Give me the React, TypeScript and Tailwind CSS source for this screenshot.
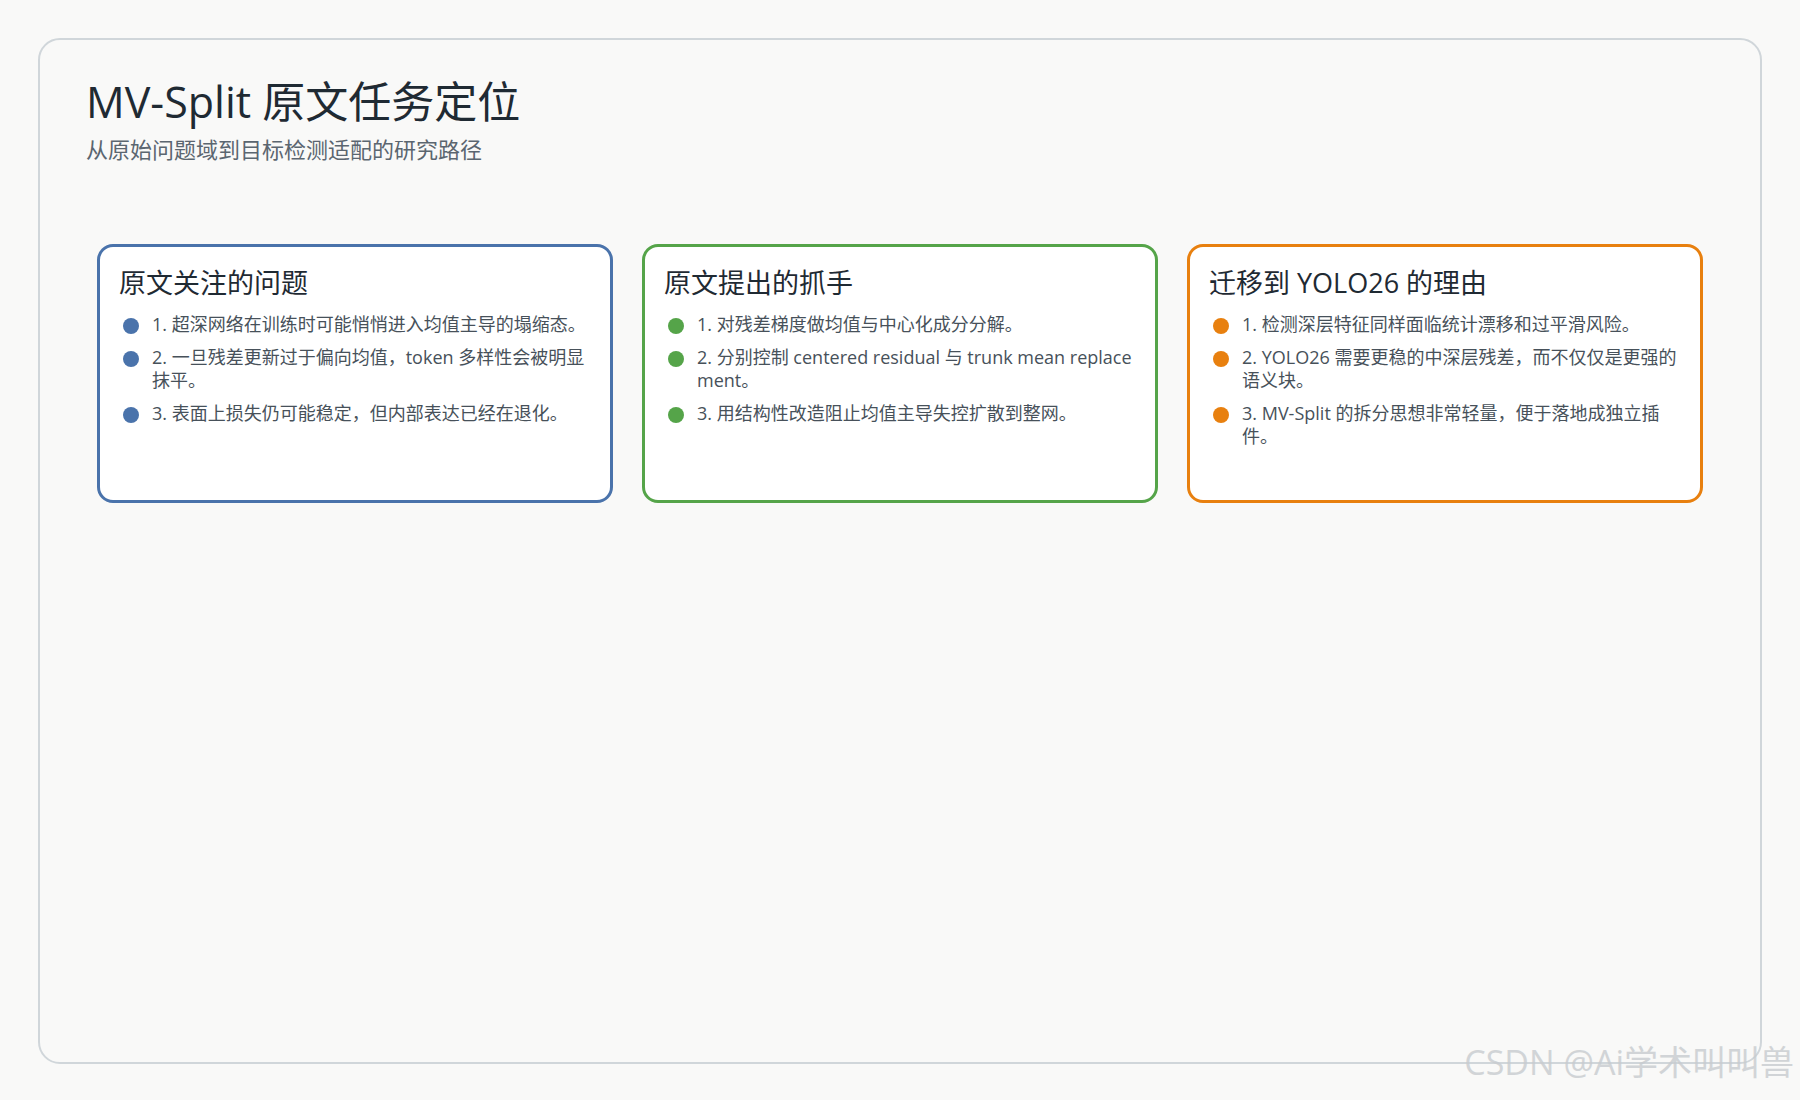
const cards = [
  {
    title: '原文关注的问题',
    border: 'border-[#4a73ab]',
    dot: 'bg-[#4a73ab]',
    items: [
      '1. 超深网络在训练时可能悄悄进入均值主导的塌缩态。',
      '2. 一旦残差更新过于偏向均值，token 多样性会被明显抹平。',
      '3. 表面上损失仍可能稳定，但内部表达已经在退化。',
    ],
  },
  {
    title: '原文提出的抓手',
    border: 'border-[#55a449]',
    dot: 'bg-[#55a449]',
    items: [
      '1. 对残差梯度做均值与中心化成分分解。',
      '2. 分别控制 centered residual 与 trunk mean replacement。',
      '3. 用结构性改造阻止均值主导失控扩散到整网。',
    ],
  },
  {
    title: '迁移到 YOLO26 的理由',
    border: 'border-[#e8800f]',
    dot: 'bg-[#e8800f]',
    items: [
      '1. 检测深层特征同样面临统计漂移和过平滑风险。',
      '2. YOLO26 需要更稳的中深层残差，而不仅仅是更强的语义块。',
      '3. MV-Split 的拆分思想非常轻量，便于落地成独立插件。',
    ],
  },
];

export default function App() {
  return (
    <div
      className="w-[1800px] h-[1100px] bg-[#f9f9f8] pt-[38px] pl-[38px] relative"
      style={{ fontFamily: '"Open Sans", "Noto Sans CJK SC", sans-serif' }}
    >
      <div className="w-[1724px] h-[1026px] border-2 border-[#d0d6da] rounded-[22px] bg-[#f9f9f8] px-[46px] pt-[34px]">
        <h1 className="text-[43px] leading-[56px] text-[#1f2a33]">MV-Split 原文任务定位</h1>
        <p className="text-[22px] leading-[30px] text-[#5b6670] mt-[4px]">从原始问题域到目标检测适配的研究路径</p>
        <div className="flex gap-[29px] mt-[80px] px-[11px]">
          {cards.map((c) => (
            <div
              key={c.title}
              className={`w-[524px] h-[259px] border-[3px] ${c.border} rounded-[16px] bg-white px-[19px] pt-[18px]`}
            >
              <h2 className="text-[27px] leading-[36px] text-[#1f2a33]">{c.title}</h2>
              <ul className="mt-[12px] flex flex-col gap-[10px]">
                {c.items.map((t) => (
                  <li key={t} className="flex items-start text-[18px] leading-[23px] text-[#47515a]">
                    <span className={`shrink-0 w-[16px] h-[16px] rounded-full ${c.dot} mt-[5px] ml-[4px] mr-[13px]`} />
                    <span className="break-all">{t}</span>
                  </li>
                ))}
              </ul>
            </div>
          ))}
        </div>
      </div>
      <div className="absolute right-[6px] bottom-[12px] text-[34px] text-[#c8cccf] opacity-80">CSDN @Ai学术叫叫兽</div>
    </div>
  );
}
